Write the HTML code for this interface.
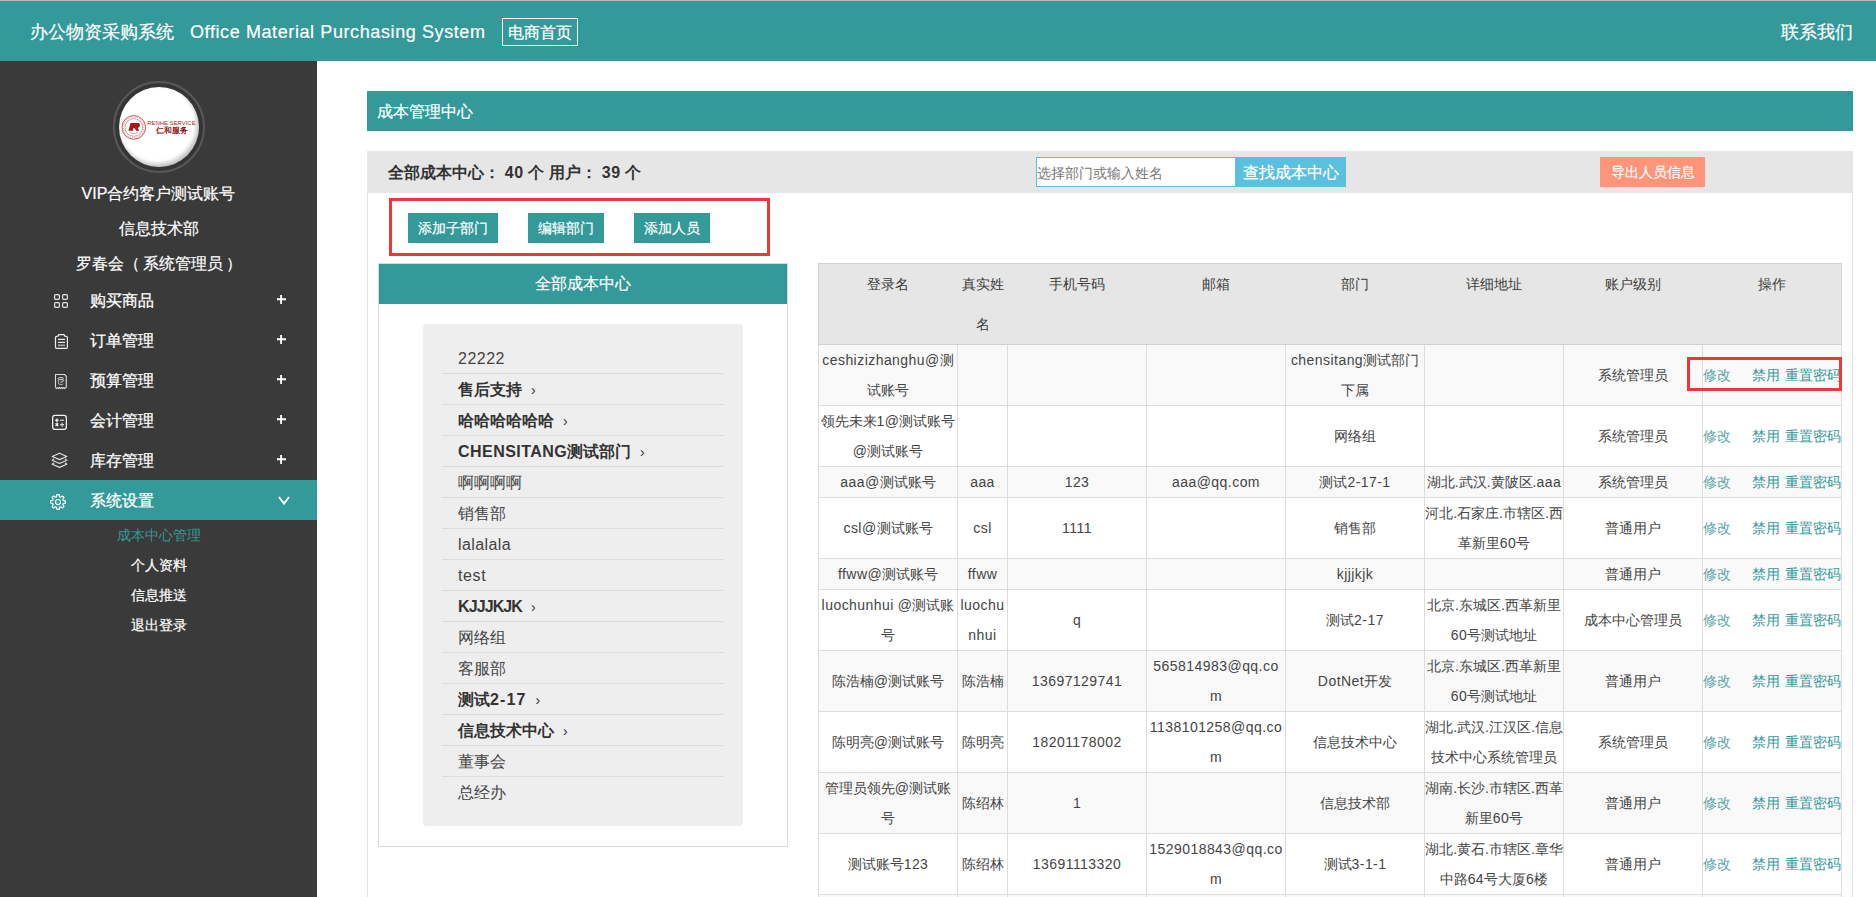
<!DOCTYPE html>
<html><head><meta charset="utf-8"><title>成本中心管理</title>
<style>
*{margin:0;padding:0;box-sizing:border-box}
html,body{width:1876px;height:897px;overflow:hidden;background:#fff;font-family:"Liberation Sans",sans-serif;color:#333}
.a{position:absolute;white-space:nowrap}
.c{text-align:center}
.l{letter-spacing:0.45px}
.w{color:#fff;-webkit-text-stroke:0.2px #fff}
</style></head><body>

<div class="a" style="left:0;top:0;width:1876px;height:1px;background:#bdb8b9"></div>
<div class="a" style="left:0;top:1px;width:1876px;height:60px;background:#339999"></div>
<div class="a w" style="left:30px;top:18px;height:28px;line-height:28px;font-size:18px">办公物资采购系统</div>
<div class="a w" style="left:190px;top:18px;height:28px;line-height:28px;font-size:18px;letter-spacing:0.6px">Office Material Purchasing System</div>
<div class="a w c" style="left:502px;top:18px;width:76px;height:28px;line-height:27px;font-size:16px;border:1px solid #fff">电商首页</div>
<div class="a w" style="left:1781px;top:18px;height:28px;line-height:28px;font-size:18px">联系我们</div>
<div class="a" style="left:0;top:61px;width:317px;height:836px;background:#3a3a3a"></div>
<div class="a" style="left:113px;top:81px;width:92px;height:92px;border-radius:50%;border:2px solid #575757;background:#353535"></div>
<div class="a" style="left:119px;top:87px;width:80px;height:80px;border-radius:50%;background:#fff;box-shadow:inset -2px -3px 4px rgba(0,0,0,0.25)">
<svg width="80" height="80" viewBox="0 0 80 80" style="position:absolute;left:0;top:0">
<circle cx="14.8" cy="40.4" r="11.8" fill="none" stroke="#b54848" stroke-width="0.9"/>
<circle cx="14.8" cy="40.4" r="10.2" fill="none" stroke="#dca0a0" stroke-width="1.6" stroke-dasharray="0.7 1.2"/>
<circle cx="14.8" cy="40.4" r="8.8" fill="none" stroke="#c06060" stroke-width="0.6"/>
<path d="M11.5 36 L19.5 36 Q21.5 36.5 21 38.8 Q20.5 40.5 18.5 41 L20.5 43.8 L17.2 43.8 L15.6 41.3 L14.5 41.3 L13.8 43.8 L9.4 43.8 Z" fill="#a81818"/>
<path d="M10.5 45 Q14.8 48.5 19.5 45" fill="none" stroke="#c06060" stroke-width="0.6"/>
<text x="28.3" y="37.8" font-size="6" textLength="48.3" lengthAdjust="spacingAndGlyphs" fill="#a82a2a" style="font-family:'Liberation Sans'">RENHE SERVICE</text>
<text x="37" y="45.6" font-size="7.8" textLength="31.5" lengthAdjust="spacingAndGlyphs" font-weight="bold" fill="#8f1418" style="font-family:'Liberation Sans',sans-serif">仁和服务</text>
</svg></div>
<div class="a w c" style="left:0;top:180px;width:317px;height:28px;line-height:28px;font-size:16px">VIP合约客户测试账号</div>
<div class="a w c" style="left:0;top:215px;width:317px;height:28px;line-height:28px;font-size:16px">信息技术部</div>
<div class="a w" style="left:76px;top:250px;height:28px;line-height:28px;font-size:16px">罗春会（<span style="margin-left:3px">系统管理员</span><span style="margin-left:3px">）</span></div>
<div class="a" style="left:50px;top:290px;line-height:0"><svg width="22" height="22" viewBox="0 0 22 22"><g fill="none" stroke="#e6e6e6" stroke-width="1.2"><rect x="4.6" y="4.6" width="4.8" height="4.8" rx="1.1"/><rect x="12.6" y="4.6" width="4.8" height="4.8" rx="1.1"/><rect x="4.6" y="12.6" width="4.8" height="4.8" rx="1.1"/><rect x="12.6" y="12.6" width="4.8" height="4.8" rx="1.1"/></g></svg></div>
<div class="a w" style="left:90px;top:281px;height:40px;line-height:40px;font-size:16px;-webkit-text-stroke:0.25px #fff">购买商品</div>
<svg class="a" style="left:276px;top:294px" width="12" height="12" viewBox="0 0 12 12"><path d="M5.1 1 V10 M1 5.3 H10" stroke="#fff" stroke-width="1.9"/></svg>
<div class="a" style="left:50px;top:330px;line-height:0"><svg width="22" height="22" viewBox="0 0 22 22"><g fill="none" stroke="#eee" stroke-width="1.2"><path d="M7.6 6.4 H6.6 Q5.5 6.4 5.5 7.5 V17.3 Q5.5 18.4 6.6 18.4 H16.3 Q17.4 18.4 17.4 17.3 V7.5 Q17.4 6.4 16.3 6.4 H15.2"/><path d="M7.6 6.6 L8.8 4.6 H14 L15.2 6.6"/></g><path d="M8 9.4 H15 M8 12.4 H15" stroke="#e8e8e8" stroke-width="1.1"/><path d="M8 15.3 H15" stroke="#aaa" stroke-width="1.6"/></svg></div>
<div class="a w" style="left:90px;top:321px;height:40px;line-height:40px;font-size:16px;-webkit-text-stroke:0.25px #fff">订单管理</div>
<svg class="a" style="left:276px;top:334px" width="12" height="12" viewBox="0 0 12 12"><path d="M5.1 1 V10 M1 5.3 H10" stroke="#fff" stroke-width="1.9"/></svg>
<div class="a" style="left:50px;top:370px;line-height:0"><svg width="22" height="22" viewBox="0 0 22 22"><g fill="none" stroke="#ddd" stroke-width="1.1"><path d="M5.5 17.6 V4.5 H14.6 L16.3 6.3 V17.6"/><path d="M5.5 17.6 L6.5 18.5 L7.6 17.6 L8.6 18.5 L9.6 17.6 L10.6 18.5 L11.6 17.6 L12.6 18.5 L13.6 17.6 L14.6 18.5 L15.6 17.6 L16.3 17.6"/><path d="M8.3 8.7 Q8.3 7.6 9.4 7.6 H12.2 Q13.4 7.6 13.4 8.7 Q13.4 9.6 12.2 9.6 H9.4 Q8.3 9.6 8.3 8.7 Z" stroke-width="1"/><path d="M8.3 9.4 V12.8 Q8.3 14.6 10.6 14.6 Q12.8 14.6 13.2 13.6" stroke="#bbb" stroke-width="1"/><path d="M10.4 12.6 L14.2 10.2" stroke="#aaa" stroke-width="1.3"/></g></svg></div>
<div class="a w" style="left:90px;top:361px;height:40px;line-height:40px;font-size:16px;-webkit-text-stroke:0.25px #fff">预算管理</div>
<svg class="a" style="left:276px;top:374px" width="12" height="12" viewBox="0 0 12 12"><path d="M5.1 1 V10 M1 5.3 H10" stroke="#fff" stroke-width="1.9"/></svg>
<div class="a" style="left:48px;top:411px;line-height:0"><svg width="22" height="22" viewBox="0 0 22 22"><rect x="4.65" y="4.45" width="13.7" height="13.9" rx="2.3" fill="none" stroke="#f2f2f2" stroke-width="1.3"/><g stroke="#f0f0f0" stroke-width="1.4"><path d="M7.2 9.3 H10.6 M8.9 7.4 V11.2"/><path d="M12 9.3 H16" stroke="#ccc" stroke-width="1.3"/><path d="M7.6 12.3 L10.2 15 M10.2 12.3 L7.6 15"/><path d="M12.2 13.7 H16" stroke="#ddd"/></g><circle cx="14.1" cy="12.2" r="0.8" fill="#ccc"/><circle cx="14.1" cy="15.3" r="0.8" fill="#ccc"/></svg></div>
<div class="a w" style="left:90px;top:401px;height:40px;line-height:40px;font-size:16px;-webkit-text-stroke:0.25px #fff">会计管理</div>
<svg class="a" style="left:276px;top:414px" width="12" height="12" viewBox="0 0 12 12"><path d="M5.1 1 V10 M1 5.3 H10" stroke="#fff" stroke-width="1.9"/></svg>
<div class="a" style="left:48px;top:449px;line-height:0"><svg width="22" height="22" viewBox="0 0 22 22"><g fill="none" stroke="#e0e0e0" stroke-width="1.15" stroke-linejoin="round"><path d="M11.5 4.3 L18.8 7.5 L11.5 10.6 L4.2 7.5 Z"/><path d="M6 9.9 L4.2 11.3 L11.5 14.5 L18.8 11.3 L17 9.9"/><path d="M6 13.8 L4.2 15.2 L11.5 18.4 L18.8 15.2 L17 13.8"/></g></svg></div>
<div class="a w" style="left:90px;top:441px;height:40px;line-height:40px;font-size:16px;-webkit-text-stroke:0.25px #fff">库存管理</div>
<svg class="a" style="left:276px;top:454px" width="12" height="12" viewBox="0 0 12 12"><path d="M5.1 1 V10 M1 5.3 H10" stroke="#fff" stroke-width="1.9"/></svg>
<div class="a" style="left:0;top:480px;width:317px;height:40px;background:#339999"></div>
<div class="a" style="left:47px;top:491px;line-height:0"><svg width="22" height="22" viewBox="0 0 22 22"><path d="M16.06 9.43 L18.31 9.82 A7.40 7.40 0 0 1 18.31 12.18 L16.06 12.57 A5.30 5.30 0 0 1 15.69 13.47 L17.00 15.33 A7.40 7.40 0 0 1 15.33 17.00 L13.47 15.69 A5.30 5.30 0 0 1 12.57 16.06 L12.18 18.31 A7.40 7.40 0 0 1 9.82 18.31 L9.43 16.06 A5.30 5.30 0 0 1 8.53 15.69 L6.67 17.00 A7.40 7.40 0 0 1 5.00 15.33 L6.31 13.47 A5.30 5.30 0 0 1 5.94 12.57 L3.69 12.18 A7.40 7.40 0 0 1 3.69 9.82 L5.94 9.43 A5.30 5.30 0 0 1 6.31 8.53 L5.00 6.67 A7.40 7.40 0 0 1 6.67 5.00 L8.53 6.31 A5.30 5.30 0 0 1 9.43 5.94 L9.82 3.69 A7.40 7.40 0 0 1 12.18 3.69 L12.57 5.94 A5.30 5.30 0 0 1 13.47 6.31 L15.33 5.00 A7.40 7.40 0 0 1 17.00 6.67 L15.69 8.53 A5.30 5.30 0 0 1 16.06 9.43 Z" fill="none" stroke="#fff" stroke-width="1.15" stroke-linejoin="round"/><circle cx="11" cy="11" r="2.5" fill="none" stroke="#fff" stroke-width="1.2"/></svg></div>
<div class="a w" style="left:90px;top:481px;height:40px;line-height:40px;font-size:16px;-webkit-text-stroke:0.25px #fff">系统设置</div>
<svg class="a" style="left:278px;top:496px" width="12" height="10" viewBox="0 0 12 10"><path d="M1 1 L6 7.6 L11 1" fill="none" stroke="#fff" stroke-width="2"/></svg>
<div class="a c" style="left:0;top:520px;width:317px;height:30px;line-height:30px;font-size:14px;color:#339999;-webkit-text-stroke:0 #339999">成本中心管理</div>
<div class="a c" style="left:0;top:550px;width:317px;height:30px;line-height:30px;font-size:14px;color:#fff;-webkit-text-stroke:0.2px #fff">个人资料</div>
<div class="a c" style="left:0;top:580px;width:317px;height:30px;line-height:30px;font-size:14px;color:#fff;-webkit-text-stroke:0.2px #fff">信息推送</div>
<div class="a c" style="left:0;top:610px;width:317px;height:30px;line-height:30px;font-size:14px;color:#fff;-webkit-text-stroke:0.2px #fff">退出登录</div>
<div class="a" style="left:367px;top:91px;width:1486px;height:40px;background:#339999"></div>
<div class="a w" style="left:377px;top:92px;height:40px;line-height:40px;font-size:16px;-webkit-text-stroke:0.2px #fff">成本管理中心</div>
<div class="a" style="left:367px;top:151px;width:1486px;height:760px;border:1px solid #e3e3e3;border-top:none"></div>
<div class="a" style="left:367px;top:151px;width:1486px;height:42px;background:#e6e6e6"></div>
<div class="a" style="left:388px;top:159px;height:28px;line-height:28px;font-size:16px;font-weight:bold;color:#333;word-spacing:0.3px">全部成本中心： <span style="letter-spacing:0.5px">40</span> 个 用户： <span style="letter-spacing:0.5px">39</span> 个</div>
<div class="a" style="left:1036px;top:157px;width:200px;height:30px;background:#fff;border:1px solid #5bc0de"></div>
<div class="a" style="left:1037px;top:158px;height:30px;line-height:30px;font-size:14px;color:#777">选择部门或输入姓名</div>
<div class="a" style="left:1235px;top:157px;width:111px;height:30px;background:#5bc0de"></div><div class="a w c" style="left:1235px;top:158px;width:111px;height:30px;line-height:30px;font-size:16px">查找成本中心</div>
<div class="a w c" style="left:1600px;top:157px;width:105px;height:30px;line-height:30px;font-size:14px;background:#fe957a">导出人员信息</div>
<div class="a" style="left:389px;top:198px;width:381px;height:58px;border:3px solid #f23535"></div>
<div class="a w c" style="left:408px;top:213px;width:90px;height:30px;line-height:30px;font-size:14px;background:#339999">添加子部门</div>
<div class="a w c" style="left:528px;top:213px;width:76px;height:30px;line-height:30px;font-size:14px;background:#339999">编辑部门</div>
<div class="a w c" style="left:634px;top:213px;width:76px;height:30px;line-height:30px;font-size:14px;background:#339999">添加人员</div>
<div class="a" style="left:378px;top:263px;width:410px;height:584px;border:1px solid #d9d9d9"></div>
<div class="a w c" style="left:379px;top:264px;width:408px;height:40px;line-height:40px;font-size:16px;background:#339999">全部成本中心</div>
<div class="a" style="left:423px;top:324px;width:320px;height:502px;background:#eeeeee;border-radius:4px"></div>
<div class="a" style="left:458px;top:344px;height:30px;line-height:30px;font-size:16px;color:#444"><span style="letter-spacing:0.5px">22222</span></div>
<div class="a" style="left:442px;top:373px;width:282px;height:1px;background:#dcdcdc"></div>
<div class="a" style="left:458px;top:375px;height:30px;line-height:30px;font-size:16px;font-weight:bold;color:#333">售后支持<span style="font-weight:normal;font-size:14px;margin-left:9px">›</span></div>
<div class="a" style="left:442px;top:404px;width:282px;height:1px;background:#dcdcdc"></div>
<div class="a" style="left:458px;top:406px;height:30px;line-height:30px;font-size:16px;font-weight:bold;color:#333">哈哈哈哈哈哈<span style="font-weight:normal;font-size:14px;margin-left:9px">›</span></div>
<div class="a" style="left:442px;top:435px;width:282px;height:1px;background:#dcdcdc"></div>
<div class="a" style="left:458px;top:437px;height:30px;line-height:30px;font-size:16px;font-weight:bold;color:#333"><span style="letter-spacing:0.45px">CHENSITANG</span>测试部门<span style="font-weight:normal;font-size:14px;margin-left:9px">›</span></div>
<div class="a" style="left:442px;top:466px;width:282px;height:1px;background:#dcdcdc"></div>
<div class="a" style="left:458px;top:468px;height:30px;line-height:30px;font-size:16px;color:#444">啊啊啊啊</div>
<div class="a" style="left:442px;top:497px;width:282px;height:1px;background:#dcdcdc"></div>
<div class="a" style="left:458px;top:499px;height:30px;line-height:30px;font-size:16px;color:#444">销售部</div>
<div class="a" style="left:442px;top:528px;width:282px;height:1px;background:#dcdcdc"></div>
<div class="a" style="left:458px;top:530px;height:30px;line-height:30px;font-size:16px;color:#444"><span style="letter-spacing:0.4px">lalalala</span></div>
<div class="a" style="left:442px;top:559px;width:282px;height:1px;background:#dcdcdc"></div>
<div class="a" style="left:458px;top:561px;height:30px;line-height:30px;font-size:16px;color:#444"><span style="letter-spacing:0.6px">test</span></div>
<div class="a" style="left:442px;top:590px;width:282px;height:1px;background:#dcdcdc"></div>
<div class="a" style="left:458px;top:592px;height:30px;line-height:30px;font-size:16px;font-weight:bold;color:#333"><span style="letter-spacing:-0.9px">KJJJKJK</span><span style="font-weight:normal;font-size:14px;margin-left:9px">›</span></div>
<div class="a" style="left:442px;top:621px;width:282px;height:1px;background:#dcdcdc"></div>
<div class="a" style="left:458px;top:623px;height:30px;line-height:30px;font-size:16px;color:#444">网络组</div>
<div class="a" style="left:442px;top:652px;width:282px;height:1px;background:#dcdcdc"></div>
<div class="a" style="left:458px;top:654px;height:30px;line-height:30px;font-size:16px;color:#444">客服部</div>
<div class="a" style="left:442px;top:683px;width:282px;height:1px;background:#dcdcdc"></div>
<div class="a" style="left:458px;top:685px;height:30px;line-height:30px;font-size:16px;font-weight:bold;color:#333">测试<span style="letter-spacing:1.1px">2-17</span><span style="font-weight:normal;font-size:14px;margin-left:9px">›</span></div>
<div class="a" style="left:442px;top:714px;width:282px;height:1px;background:#dcdcdc"></div>
<div class="a" style="left:458px;top:716px;height:30px;line-height:30px;font-size:16px;font-weight:bold;color:#333">信息技术中心<span style="font-weight:normal;font-size:14px;margin-left:9px">›</span></div>
<div class="a" style="left:442px;top:745px;width:282px;height:1px;background:#dcdcdc"></div>
<div class="a" style="left:458px;top:747px;height:30px;line-height:30px;font-size:16px;color:#444">董事会</div>
<div class="a" style="left:442px;top:776px;width:282px;height:1px;background:#dcdcdc"></div>
<div class="a" style="left:458px;top:778px;height:30px;line-height:30px;font-size:16px;color:#444">总经办</div>
<div class="a" style="left:818px;top:263px;width:1024px;height:82px;background:#e6e6e6;border:1px solid #d0d0d0"></div>
<div class="a c" style="left:819px;top:264px;width:138px;line-height:40px;font-size:14px;color:#3c3c3c">登录名</div>
<div class="a c" style="left:958px;top:264px;width:49px;line-height:40px;font-size:14px;color:#3c3c3c">真实姓<br>名</div>
<div class="a c" style="left:1008px;top:264px;width:138px;line-height:40px;font-size:14px;color:#3c3c3c">手机号码</div>
<div class="a c" style="left:1147px;top:264px;width:138px;line-height:40px;font-size:14px;color:#3c3c3c">邮箱</div>
<div class="a c" style="left:1286px;top:264px;width:138px;line-height:40px;font-size:14px;color:#3c3c3c">部门</div>
<div class="a c" style="left:1425px;top:264px;width:138px;line-height:40px;font-size:14px;color:#3c3c3c">详细地址</div>
<div class="a c" style="left:1564px;top:264px;width:138px;line-height:40px;font-size:14px;color:#3c3c3c">账户级别</div>
<div class="a c" style="left:1703px;top:264px;width:138px;line-height:40px;font-size:14px;color:#3c3c3c">操作</div>
<div class="a" style="left:819px;top:345px;width:1022px;height:60px;background:#f9f9f9"></div>
<div class="a" style="left:819px;top:406px;width:1022px;height:60px;background:#ffffff"></div>
<div class="a" style="left:819px;top:467px;width:1022px;height:30px;background:#f9f9f9"></div>
<div class="a" style="left:819px;top:498px;width:1022px;height:60px;background:#ffffff"></div>
<div class="a" style="left:819px;top:559px;width:1022px;height:30px;background:#f9f9f9"></div>
<div class="a" style="left:819px;top:590px;width:1022px;height:60px;background:#ffffff"></div>
<div class="a" style="left:819px;top:651px;width:1022px;height:60px;background:#f9f9f9"></div>
<div class="a" style="left:819px;top:712px;width:1022px;height:60px;background:#ffffff"></div>
<div class="a" style="left:819px;top:773px;width:1022px;height:60px;background:#f9f9f9"></div>
<div class="a" style="left:819px;top:834px;width:1022px;height:60px;background:#ffffff"></div>
<div class="a" style="left:819px;top:895px;width:1022px;height:60px;background:#f9f9f9"></div>
<div class="a" style="left:818px;top:344px;width:1024px;height:1px;background:#dddddd"></div>
<div class="a" style="left:818px;top:344px;width:1px;height:61px;background:#dddddd"></div>
<div class="a" style="left:957px;top:344px;width:1px;height:61px;background:#dddddd"></div>
<div class="a" style="left:1007px;top:344px;width:1px;height:61px;background:#dddddd"></div>
<div class="a" style="left:1146px;top:344px;width:1px;height:61px;background:#dddddd"></div>
<div class="a" style="left:1285px;top:344px;width:1px;height:61px;background:#dddddd"></div>
<div class="a" style="left:1424px;top:344px;width:1px;height:61px;background:#dddddd"></div>
<div class="a" style="left:1563px;top:344px;width:1px;height:61px;background:#dddddd"></div>
<div class="a" style="left:1702px;top:344px;width:1px;height:61px;background:#dddddd"></div>
<div class="a" style="left:1841px;top:344px;width:1px;height:61px;background:#dddddd"></div>
<div class="a c" style="left:819px;top:345px;width:138px;line-height:30px;font-size:14px;color:#444"><span class="l">ceshizizhanghu@</span>测<br>试账号</div>
<div class="a c" style="left:1286px;top:345px;width:138px;line-height:30px;font-size:14px;color:#444"><span class="l">chensitang</span>测试部门<br>下属</div>
<div class="a c" style="left:1564px;top:360px;width:138px;line-height:30px;font-size:14px;color:#444">系统管理员</div>
<div class="a" style="left:1703px;top:360px;line-height:30px;font-size:14px;color:#5aa5a5">修改</div>
<div class="a" style="left:1752px;top:360px;line-height:30px;font-size:14px;color:#339999">禁用</div>
<div class="a" style="left:1785px;top:360px;line-height:30px;font-size:14px;color:#339999">重置密码</div>
<div class="a" style="left:818px;top:405px;width:1024px;height:1px;background:#dddddd"></div>
<div class="a" style="left:818px;top:405px;width:1px;height:61px;background:#dddddd"></div>
<div class="a" style="left:957px;top:405px;width:1px;height:61px;background:#dddddd"></div>
<div class="a" style="left:1007px;top:405px;width:1px;height:61px;background:#dddddd"></div>
<div class="a" style="left:1146px;top:405px;width:1px;height:61px;background:#dddddd"></div>
<div class="a" style="left:1285px;top:405px;width:1px;height:61px;background:#dddddd"></div>
<div class="a" style="left:1424px;top:405px;width:1px;height:61px;background:#dddddd"></div>
<div class="a" style="left:1563px;top:405px;width:1px;height:61px;background:#dddddd"></div>
<div class="a" style="left:1702px;top:405px;width:1px;height:61px;background:#dddddd"></div>
<div class="a" style="left:1841px;top:405px;width:1px;height:61px;background:#dddddd"></div>
<div class="a c" style="left:819px;top:406px;width:138px;line-height:30px;font-size:14px;color:#444">领先未来<span class="l">1@</span>测试账号<br><span class="l">@</span>测试账号</div>
<div class="a c" style="left:1286px;top:421px;width:138px;line-height:30px;font-size:14px;color:#444">网络组</div>
<div class="a c" style="left:1564px;top:421px;width:138px;line-height:30px;font-size:14px;color:#444">系统管理员</div>
<div class="a" style="left:1703px;top:421px;line-height:30px;font-size:14px;color:#5aa5a5">修改</div>
<div class="a" style="left:1752px;top:421px;line-height:30px;font-size:14px;color:#339999">禁用</div>
<div class="a" style="left:1785px;top:421px;line-height:30px;font-size:14px;color:#339999">重置密码</div>
<div class="a" style="left:818px;top:466px;width:1024px;height:1px;background:#dddddd"></div>
<div class="a" style="left:818px;top:466px;width:1px;height:31px;background:#dddddd"></div>
<div class="a" style="left:957px;top:466px;width:1px;height:31px;background:#dddddd"></div>
<div class="a" style="left:1007px;top:466px;width:1px;height:31px;background:#dddddd"></div>
<div class="a" style="left:1146px;top:466px;width:1px;height:31px;background:#dddddd"></div>
<div class="a" style="left:1285px;top:466px;width:1px;height:31px;background:#dddddd"></div>
<div class="a" style="left:1424px;top:466px;width:1px;height:31px;background:#dddddd"></div>
<div class="a" style="left:1563px;top:466px;width:1px;height:31px;background:#dddddd"></div>
<div class="a" style="left:1702px;top:466px;width:1px;height:31px;background:#dddddd"></div>
<div class="a" style="left:1841px;top:466px;width:1px;height:31px;background:#dddddd"></div>
<div class="a c" style="left:819px;top:467px;width:138px;line-height:30px;font-size:14px;color:#444"><span class="l">aaa@</span>测试账号</div>
<div class="a c" style="left:958px;top:467px;width:49px;line-height:30px;font-size:14px;color:#444"><span class="l">aaa</span></div>
<div class="a c" style="left:1008px;top:467px;width:138px;line-height:30px;font-size:14px;color:#444"><span class="l">123</span></div>
<div class="a c" style="left:1147px;top:467px;width:138px;line-height:30px;font-size:14px;color:#444"><span class="l">aaa@qq.com</span></div>
<div class="a c" style="left:1286px;top:467px;width:138px;line-height:30px;font-size:14px;color:#444">测试<span class="l">2-17-1</span></div>
<div class="a c" style="left:1425px;top:467px;width:138px;line-height:30px;font-size:14px;color:#444">湖北.武汉.黄陂区.<span class="l">aaa</span></div>
<div class="a c" style="left:1564px;top:467px;width:138px;line-height:30px;font-size:14px;color:#444">系统管理员</div>
<div class="a" style="left:1703px;top:467px;line-height:30px;font-size:14px;color:#5aa5a5">修改</div>
<div class="a" style="left:1752px;top:467px;line-height:30px;font-size:14px;color:#339999">禁用</div>
<div class="a" style="left:1785px;top:467px;line-height:30px;font-size:14px;color:#339999">重置密码</div>
<div class="a" style="left:818px;top:497px;width:1024px;height:1px;background:#dddddd"></div>
<div class="a" style="left:818px;top:497px;width:1px;height:61px;background:#dddddd"></div>
<div class="a" style="left:957px;top:497px;width:1px;height:61px;background:#dddddd"></div>
<div class="a" style="left:1007px;top:497px;width:1px;height:61px;background:#dddddd"></div>
<div class="a" style="left:1146px;top:497px;width:1px;height:61px;background:#dddddd"></div>
<div class="a" style="left:1285px;top:497px;width:1px;height:61px;background:#dddddd"></div>
<div class="a" style="left:1424px;top:497px;width:1px;height:61px;background:#dddddd"></div>
<div class="a" style="left:1563px;top:497px;width:1px;height:61px;background:#dddddd"></div>
<div class="a" style="left:1702px;top:497px;width:1px;height:61px;background:#dddddd"></div>
<div class="a" style="left:1841px;top:497px;width:1px;height:61px;background:#dddddd"></div>
<div class="a c" style="left:819px;top:513px;width:138px;line-height:30px;font-size:14px;color:#444"><span class="l">csl@</span>测试账号</div>
<div class="a c" style="left:958px;top:513px;width:49px;line-height:30px;font-size:14px;color:#444"><span class="l">csl</span></div>
<div class="a c" style="left:1008px;top:513px;width:138px;line-height:30px;font-size:14px;color:#444"><span class="l">1111</span></div>
<div class="a c" style="left:1286px;top:513px;width:138px;line-height:30px;font-size:14px;color:#444">销售部</div>
<div class="a c" style="left:1425px;top:498px;width:138px;line-height:30px;font-size:14px;color:#444">河北.石家庄.市辖区.西<br>革新里<span class="l">60</span>号</div>
<div class="a c" style="left:1564px;top:513px;width:138px;line-height:30px;font-size:14px;color:#444">普通用户</div>
<div class="a" style="left:1703px;top:513px;line-height:30px;font-size:14px;color:#5aa5a5">修改</div>
<div class="a" style="left:1752px;top:513px;line-height:30px;font-size:14px;color:#339999">禁用</div>
<div class="a" style="left:1785px;top:513px;line-height:30px;font-size:14px;color:#339999">重置密码</div>
<div class="a" style="left:818px;top:558px;width:1024px;height:1px;background:#dddddd"></div>
<div class="a" style="left:818px;top:558px;width:1px;height:31px;background:#dddddd"></div>
<div class="a" style="left:957px;top:558px;width:1px;height:31px;background:#dddddd"></div>
<div class="a" style="left:1007px;top:558px;width:1px;height:31px;background:#dddddd"></div>
<div class="a" style="left:1146px;top:558px;width:1px;height:31px;background:#dddddd"></div>
<div class="a" style="left:1285px;top:558px;width:1px;height:31px;background:#dddddd"></div>
<div class="a" style="left:1424px;top:558px;width:1px;height:31px;background:#dddddd"></div>
<div class="a" style="left:1563px;top:558px;width:1px;height:31px;background:#dddddd"></div>
<div class="a" style="left:1702px;top:558px;width:1px;height:31px;background:#dddddd"></div>
<div class="a" style="left:1841px;top:558px;width:1px;height:31px;background:#dddddd"></div>
<div class="a c" style="left:819px;top:559px;width:138px;line-height:30px;font-size:14px;color:#444"><span class="l">ffww@</span>测试账号</div>
<div class="a c" style="left:958px;top:559px;width:49px;line-height:30px;font-size:14px;color:#444"><span class="l">ffww</span></div>
<div class="a c" style="left:1286px;top:559px;width:138px;line-height:30px;font-size:14px;color:#444"><span class="l">kjjjkjk</span></div>
<div class="a c" style="left:1564px;top:559px;width:138px;line-height:30px;font-size:14px;color:#444">普通用户</div>
<div class="a" style="left:1703px;top:559px;line-height:30px;font-size:14px;color:#5aa5a5">修改</div>
<div class="a" style="left:1752px;top:559px;line-height:30px;font-size:14px;color:#339999">禁用</div>
<div class="a" style="left:1785px;top:559px;line-height:30px;font-size:14px;color:#339999">重置密码</div>
<div class="a" style="left:818px;top:589px;width:1024px;height:1px;background:#dddddd"></div>
<div class="a" style="left:818px;top:589px;width:1px;height:61px;background:#dddddd"></div>
<div class="a" style="left:957px;top:589px;width:1px;height:61px;background:#dddddd"></div>
<div class="a" style="left:1007px;top:589px;width:1px;height:61px;background:#dddddd"></div>
<div class="a" style="left:1146px;top:589px;width:1px;height:61px;background:#dddddd"></div>
<div class="a" style="left:1285px;top:589px;width:1px;height:61px;background:#dddddd"></div>
<div class="a" style="left:1424px;top:589px;width:1px;height:61px;background:#dddddd"></div>
<div class="a" style="left:1563px;top:589px;width:1px;height:61px;background:#dddddd"></div>
<div class="a" style="left:1702px;top:589px;width:1px;height:61px;background:#dddddd"></div>
<div class="a" style="left:1841px;top:589px;width:1px;height:61px;background:#dddddd"></div>
<div class="a c" style="left:819px;top:590px;width:138px;line-height:30px;font-size:14px;color:#444"><span class="l">luochunhui</span> <span class="l">@</span>测试账<br>号</div>
<div class="a c" style="left:958px;top:590px;width:49px;line-height:30px;font-size:14px;color:#444"><span class="l">luochu</span><br><span class="l">nhui</span></div>
<div class="a c" style="left:1008px;top:605px;width:138px;line-height:30px;font-size:14px;color:#444"><span class="l">q</span></div>
<div class="a c" style="left:1286px;top:605px;width:138px;line-height:30px;font-size:14px;color:#444">测试<span class="l">2-17</span></div>
<div class="a c" style="left:1425px;top:590px;width:138px;line-height:30px;font-size:14px;color:#444">北京.东城区.西革新里<br><span class="l">60</span>号测试地址</div>
<div class="a c" style="left:1564px;top:605px;width:138px;line-height:30px;font-size:14px;color:#444">成本中心管理员</div>
<div class="a" style="left:1703px;top:605px;line-height:30px;font-size:14px;color:#5aa5a5">修改</div>
<div class="a" style="left:1752px;top:605px;line-height:30px;font-size:14px;color:#339999">禁用</div>
<div class="a" style="left:1785px;top:605px;line-height:30px;font-size:14px;color:#339999">重置密码</div>
<div class="a" style="left:818px;top:650px;width:1024px;height:1px;background:#dddddd"></div>
<div class="a" style="left:818px;top:650px;width:1px;height:61px;background:#dddddd"></div>
<div class="a" style="left:957px;top:650px;width:1px;height:61px;background:#dddddd"></div>
<div class="a" style="left:1007px;top:650px;width:1px;height:61px;background:#dddddd"></div>
<div class="a" style="left:1146px;top:650px;width:1px;height:61px;background:#dddddd"></div>
<div class="a" style="left:1285px;top:650px;width:1px;height:61px;background:#dddddd"></div>
<div class="a" style="left:1424px;top:650px;width:1px;height:61px;background:#dddddd"></div>
<div class="a" style="left:1563px;top:650px;width:1px;height:61px;background:#dddddd"></div>
<div class="a" style="left:1702px;top:650px;width:1px;height:61px;background:#dddddd"></div>
<div class="a" style="left:1841px;top:650px;width:1px;height:61px;background:#dddddd"></div>
<div class="a c" style="left:819px;top:666px;width:138px;line-height:30px;font-size:14px;color:#444">陈浩楠<span class="l">@</span>测试账号</div>
<div class="a c" style="left:958px;top:666px;width:49px;line-height:30px;font-size:14px;color:#444">陈浩楠</div>
<div class="a c" style="left:1008px;top:666px;width:138px;line-height:30px;font-size:14px;color:#444"><span class="l">13697129741</span></div>
<div class="a c" style="left:1147px;top:651px;width:138px;line-height:30px;font-size:14px;color:#444"><span class="l">565814983@qq.co</span><br><span class="l">m</span></div>
<div class="a c" style="left:1286px;top:666px;width:138px;line-height:30px;font-size:14px;color:#444"><span class="l">DotNet</span>开发</div>
<div class="a c" style="left:1425px;top:651px;width:138px;line-height:30px;font-size:14px;color:#444">北京.东城区.西革新里<br><span class="l">60</span>号测试地址</div>
<div class="a c" style="left:1564px;top:666px;width:138px;line-height:30px;font-size:14px;color:#444">普通用户</div>
<div class="a" style="left:1703px;top:666px;line-height:30px;font-size:14px;color:#5aa5a5">修改</div>
<div class="a" style="left:1752px;top:666px;line-height:30px;font-size:14px;color:#339999">禁用</div>
<div class="a" style="left:1785px;top:666px;line-height:30px;font-size:14px;color:#339999">重置密码</div>
<div class="a" style="left:818px;top:711px;width:1024px;height:1px;background:#dddddd"></div>
<div class="a" style="left:818px;top:711px;width:1px;height:61px;background:#dddddd"></div>
<div class="a" style="left:957px;top:711px;width:1px;height:61px;background:#dddddd"></div>
<div class="a" style="left:1007px;top:711px;width:1px;height:61px;background:#dddddd"></div>
<div class="a" style="left:1146px;top:711px;width:1px;height:61px;background:#dddddd"></div>
<div class="a" style="left:1285px;top:711px;width:1px;height:61px;background:#dddddd"></div>
<div class="a" style="left:1424px;top:711px;width:1px;height:61px;background:#dddddd"></div>
<div class="a" style="left:1563px;top:711px;width:1px;height:61px;background:#dddddd"></div>
<div class="a" style="left:1702px;top:711px;width:1px;height:61px;background:#dddddd"></div>
<div class="a" style="left:1841px;top:711px;width:1px;height:61px;background:#dddddd"></div>
<div class="a c" style="left:819px;top:727px;width:138px;line-height:30px;font-size:14px;color:#444">陈明亮<span class="l">@</span>测试账号</div>
<div class="a c" style="left:958px;top:727px;width:49px;line-height:30px;font-size:14px;color:#444">陈明亮</div>
<div class="a c" style="left:1008px;top:727px;width:138px;line-height:30px;font-size:14px;color:#444"><span class="l">18201178002</span></div>
<div class="a c" style="left:1147px;top:712px;width:138px;line-height:30px;font-size:14px;color:#444"><span class="l">1138101258@qq.co</span><br><span class="l">m</span></div>
<div class="a c" style="left:1286px;top:727px;width:138px;line-height:30px;font-size:14px;color:#444">信息技术中心</div>
<div class="a c" style="left:1425px;top:712px;width:138px;line-height:30px;font-size:14px;color:#444">湖北.武汉.江汉区.信息<br>技术中心系统管理员</div>
<div class="a c" style="left:1564px;top:727px;width:138px;line-height:30px;font-size:14px;color:#444">系统管理员</div>
<div class="a" style="left:1703px;top:727px;line-height:30px;font-size:14px;color:#5aa5a5">修改</div>
<div class="a" style="left:1752px;top:727px;line-height:30px;font-size:14px;color:#339999">禁用</div>
<div class="a" style="left:1785px;top:727px;line-height:30px;font-size:14px;color:#339999">重置密码</div>
<div class="a" style="left:818px;top:772px;width:1024px;height:1px;background:#dddddd"></div>
<div class="a" style="left:818px;top:772px;width:1px;height:61px;background:#dddddd"></div>
<div class="a" style="left:957px;top:772px;width:1px;height:61px;background:#dddddd"></div>
<div class="a" style="left:1007px;top:772px;width:1px;height:61px;background:#dddddd"></div>
<div class="a" style="left:1146px;top:772px;width:1px;height:61px;background:#dddddd"></div>
<div class="a" style="left:1285px;top:772px;width:1px;height:61px;background:#dddddd"></div>
<div class="a" style="left:1424px;top:772px;width:1px;height:61px;background:#dddddd"></div>
<div class="a" style="left:1563px;top:772px;width:1px;height:61px;background:#dddddd"></div>
<div class="a" style="left:1702px;top:772px;width:1px;height:61px;background:#dddddd"></div>
<div class="a" style="left:1841px;top:772px;width:1px;height:61px;background:#dddddd"></div>
<div class="a c" style="left:819px;top:773px;width:138px;line-height:30px;font-size:14px;color:#444">管理员领先<span class="l">@</span>测试账<br>号</div>
<div class="a c" style="left:958px;top:788px;width:49px;line-height:30px;font-size:14px;color:#444">陈绍林</div>
<div class="a c" style="left:1008px;top:788px;width:138px;line-height:30px;font-size:14px;color:#444"><span class="l">1</span></div>
<div class="a c" style="left:1286px;top:788px;width:138px;line-height:30px;font-size:14px;color:#444">信息技术部</div>
<div class="a c" style="left:1425px;top:773px;width:138px;line-height:30px;font-size:14px;color:#444">湖南.长沙.市辖区.西革<br>新里<span class="l">60</span>号</div>
<div class="a c" style="left:1564px;top:788px;width:138px;line-height:30px;font-size:14px;color:#444">普通用户</div>
<div class="a" style="left:1703px;top:788px;line-height:30px;font-size:14px;color:#5aa5a5">修改</div>
<div class="a" style="left:1752px;top:788px;line-height:30px;font-size:14px;color:#339999">禁用</div>
<div class="a" style="left:1785px;top:788px;line-height:30px;font-size:14px;color:#339999">重置密码</div>
<div class="a" style="left:818px;top:833px;width:1024px;height:1px;background:#dddddd"></div>
<div class="a" style="left:818px;top:833px;width:1px;height:61px;background:#dddddd"></div>
<div class="a" style="left:957px;top:833px;width:1px;height:61px;background:#dddddd"></div>
<div class="a" style="left:1007px;top:833px;width:1px;height:61px;background:#dddddd"></div>
<div class="a" style="left:1146px;top:833px;width:1px;height:61px;background:#dddddd"></div>
<div class="a" style="left:1285px;top:833px;width:1px;height:61px;background:#dddddd"></div>
<div class="a" style="left:1424px;top:833px;width:1px;height:61px;background:#dddddd"></div>
<div class="a" style="left:1563px;top:833px;width:1px;height:61px;background:#dddddd"></div>
<div class="a" style="left:1702px;top:833px;width:1px;height:61px;background:#dddddd"></div>
<div class="a" style="left:1841px;top:833px;width:1px;height:61px;background:#dddddd"></div>
<div class="a c" style="left:819px;top:849px;width:138px;line-height:30px;font-size:14px;color:#444">测试账号<span class="l">123</span></div>
<div class="a c" style="left:958px;top:849px;width:49px;line-height:30px;font-size:14px;color:#444">陈绍林</div>
<div class="a c" style="left:1008px;top:849px;width:138px;line-height:30px;font-size:14px;color:#444"><span class="l">13691113320</span></div>
<div class="a c" style="left:1147px;top:834px;width:138px;line-height:30px;font-size:14px;color:#444"><span class="l">1529018843@qq.co</span><br><span class="l">m</span></div>
<div class="a c" style="left:1286px;top:849px;width:138px;line-height:30px;font-size:14px;color:#444">测试<span class="l">3-1-1</span></div>
<div class="a c" style="left:1425px;top:834px;width:138px;line-height:30px;font-size:14px;color:#444">湖北.黄石.市辖区.章华<br>中路<span class="l">64</span>号大厦<span class="l">6</span>楼</div>
<div class="a c" style="left:1564px;top:849px;width:138px;line-height:30px;font-size:14px;color:#444">普通用户</div>
<div class="a" style="left:1703px;top:849px;line-height:30px;font-size:14px;color:#5aa5a5">修改</div>
<div class="a" style="left:1752px;top:849px;line-height:30px;font-size:14px;color:#339999">禁用</div>
<div class="a" style="left:1785px;top:849px;line-height:30px;font-size:14px;color:#339999">重置密码</div>
<div class="a" style="left:818px;top:894px;width:1024px;height:1px;background:#dddddd"></div>
<div class="a" style="left:818px;top:894px;width:1px;height:61px;background:#dddddd"></div>
<div class="a" style="left:957px;top:894px;width:1px;height:61px;background:#dddddd"></div>
<div class="a" style="left:1007px;top:894px;width:1px;height:61px;background:#dddddd"></div>
<div class="a" style="left:1146px;top:894px;width:1px;height:61px;background:#dddddd"></div>
<div class="a" style="left:1285px;top:894px;width:1px;height:61px;background:#dddddd"></div>
<div class="a" style="left:1424px;top:894px;width:1px;height:61px;background:#dddddd"></div>
<div class="a" style="left:1563px;top:894px;width:1px;height:61px;background:#dddddd"></div>
<div class="a" style="left:1702px;top:894px;width:1px;height:61px;background:#dddddd"></div>
<div class="a" style="left:1841px;top:894px;width:1px;height:61px;background:#dddddd"></div>
<div class="a c" style="left:1564px;top:910px;width:138px;line-height:30px;font-size:14px;color:#444">普通用户</div>
<div class="a" style="left:1703px;top:910px;line-height:30px;font-size:14px;color:#5aa5a5">修改</div>
<div class="a" style="left:1752px;top:910px;line-height:30px;font-size:14px;color:#339999">禁用</div>
<div class="a" style="left:1785px;top:910px;line-height:30px;font-size:14px;color:#339999">重置密码</div>
<div class="a" style="left:818px;top:344px;width:1024px;height:1px;background:#d0d0d0"></div>
<div class="a" style="left:1687px;top:357px;width:155px;height:34px;border:3px solid #f23535"></div>
</body></html>
